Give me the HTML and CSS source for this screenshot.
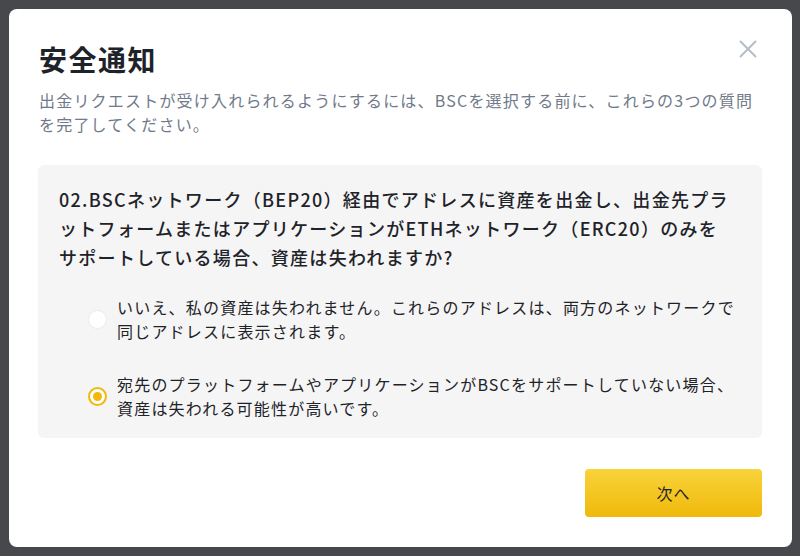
FILE: index.html
```html
<!DOCTYPE html>
<html lang="ja">
<head>
<meta charset="utf-8">
<link rel="stylesheet" href="styles.css">
</head>
<body>
<div class="overlay">
  <div class="modal">
    <button class="close" aria-label="閉じる">
      <svg width="18" height="18" viewBox="0 0 18 18"><path d="M1 1 L17 17 M17 1 L1 17" stroke="#b7bdc6" stroke-width="2" fill="none"/></svg>
    </button>
    <h1 class="title">安全通知</h1>
    <p class="subtitle">出金リクエストが受け入れられるようにするには、BSCを選択する前に、これらの3つの質問を完了してください。</p>
    <div class="quiz">
      <p class="question">02.BSCネットワーク（BEP20）経由でアドレスに資産を出金し、出金先プラットフォームまたはアプリケーションがETHネットワーク（ERC20）のみをサポートしている場合、資産は失われますか?</p>
      <div class="options">
        <label class="option">
          <span class="radio"></span>
          <span class="opt-text">いいえ、私の資産は失われません。これらのアドレスは、両方のネットワークで同じアドレスに表示されます。</span>
        </label>
        <label class="option">
          <span class="radio checked"></span>
          <span class="opt-text">宛先のプラットフォームやアプリケーションがBSCをサポートしていない場合、資産は失われる可能性が高いです。</span>
        </label>
      </div>
    </div>
    <div class="footer">
      <button class="next">次へ</button>
    </div>
  </div>
</div>
</body>
</html>
```

FILE: styles.css
```css
* { box-sizing: border-box; }
html, body { margin: 0; padding: 0; }
body {
  width: 800px;
  height: 556px;
  background: #47484c;
  font-family: "Roboto", "Noto Sans CJK JP", sans-serif;
  color: #1e2329;
  overflow: hidden;
}
.overlay {
  padding: 9px 8px 9px 9px;
}
.modal {
  position: relative;
  width: 783px;
  height: 538px;
  background: #ffffff;
  border-radius: 8px;
  padding: 32px 30px 30px 29px;
  display: flex;
  flex-direction: column;
}
.close {
  position: absolute;
  top: 31px;
  right: 35px;
  width: 18px;
  height: 18px;
  padding: 0;
  border: 0;
  background: none;
}
.close svg { display: block; }
.title {
  margin: 0 0 0 1px;
  font-size: 28px;
  line-height: 36px;
  font-weight: 700;
  letter-spacing: 1.5px;
  font-family: "Noto Sans CJK JP", sans-serif;
  color: #1e2329;
}
.subtitle {
  margin: 11px 0 0 1px;
  font-size: 16px;
  line-height: 24px;
  letter-spacing: 1.2px;
  color: #707a8a;
  font-family: "Noto Sans CJK JP", sans-serif;
}
.quiz {
  margin-top: 29px;
  background: #f5f5f5;
  border-radius: 6px;
  padding: 20px 20px 18px 21px;
}
.question {
  margin: 0;
  padding-right: 7px;
  font-size: 18px;
  line-height: 29px;
  font-weight: 500;
  letter-spacing: 1.3px;
  font-family: "Noto Sans CJK JP", sans-serif;
  color: #1e2329;
}
.options {
  margin-top: 23px;
  display: flex;
  flex-direction: column;
  gap: 29px;
  padding-left: 29px;
}
.option {
  display: flex;
  align-items: center;
  gap: 10px;
}
.radio {
  flex: 0 0 auto;
  width: 19px;
  height: 19px;
  border-radius: 50%;
  background: #ffffff;
  border: 1px solid #eaecef;
  position: relative;
}
.radio.checked {
  border: 2px solid #f0b90b;
}
.radio.checked::after {
  content: "";
  position: absolute;
  left: 50%;
  top: 50%;
  width: 9px;
  height: 9px;
  margin: -4.5px 0 0 -4.5px;
  border-radius: 50%;
  background: #f0b90b;
}
.opt-text {
  font-size: 16px;
  line-height: 24px;
  letter-spacing: 1.2px;
  font-family: "Noto Sans CJK JP", sans-serif;
  color: #1e2329;
}
.footer {
  margin-top: 31px;
  display: flex;
  justify-content: flex-end;
}
.next {
  width: 177px;
  height: 48px;
  border: 0;
  border-radius: 4px;
  background: linear-gradient(180deg, #f8d33a 0%, #f0b90b 100%);
  font-family: "Noto Sans CJK JP", sans-serif;
  font-size: 16px;
  letter-spacing: 1px;
  color: #1e2329;
}
```
